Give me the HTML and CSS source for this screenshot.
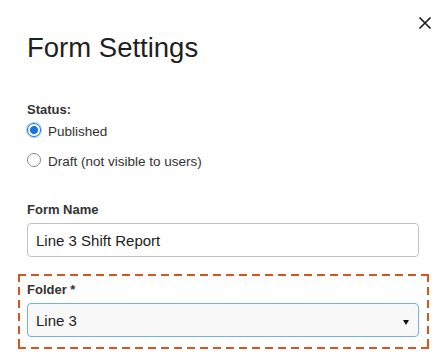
FILE: index.html
```html
<!DOCTYPE html>
<html lang="en">

<head>
    <meta charset="UTF-8">
    <meta name="viewport" content="width=device-width, initial-scale=1.0">
    <title>Form Settings</title>
    <link rel="stylesheet" href="styles.css">
</head>

<body>

    <div class="modal">
        <button class="close-btn" aria-label="Close">
            <svg width="14" height="14" viewBox="0 0 14 14">
                <path d="M1.5 1.5 L12.5 12.5 M12.5 1.5 L1.5 12.5" stroke="#1e1e1e" stroke-width="1.7" fill="none" />
            </svg>
        </button>

        <h1 class="modal-title">Form Settings</h1>

        <div class="field">
            <div class="field-label">Status:</div>
            <label class="radio-row">
                <input type="radio" name="status" class="radio" checked>
                <span>Published</span>
            </label>
            <label class="radio-row">
                <input type="radio" name="status" class="radio">
                <span>Draft (not visible to users)</span>
            </label>
        </div>

        <div class="field field-name">
            <label class="field-label" for="form-name">Form Name</label>
            <input type="text" class="text-input" id="form-name" value="Line 3 Shift Report">
        </div>

        <div class="field field-folder">
            <label class="field-label" for="folder">Folder *</label>
            <div class="select-wrap">
                <select class="select-input" id="folder">
                    <option>Line 3</option>
                    <option>Line 1</option>
                    <option>Line 2</option>
                </select>
            </div>
        </div>
    </div>

</body>

</html>
```

FILE: styles.css
```css
body {
    margin: 0;
    background-color: #fff;
    font-family: 'Liberation Sans', Arial, sans-serif;
    color: #333;
}

.modal {
    position: relative;
    padding: 31px 28px 0 27px;
}

.close-btn {
    position: absolute;
    top: 16px;
    right: 15px;
    width: 14px;
    height: 14px;
    padding: 0;
    border: none;
    background: none;
    cursor: pointer;
}

.close-btn svg {
    display: block;
}

.modal-title {
    margin: 0 0 37px;
    font-size: 27.5px;
    line-height: 34px;
    font-weight: 400;
    color: #1f1f1f;
}

.field-label {
    display: block;
    font-size: 13px;
    line-height: 16px;
    font-weight: bold;
    color: #333;
}

.radio-row {
    display: flex;
    align-items: flex-start;
    gap: 7px;
    margin-top: 4px;
    font-size: 13.5px;
    line-height: 20px;
    color: #333;
}

.radio-row + .radio-row {
    margin-top: 10px;
}

.radio {
    appearance: none;
    width: 14px;
    height: 14px;
    margin: 1px 0 0;
    border: 1px solid #8a8a8a;
    border-radius: 50%;
    background: #fff;
}

.radio:checked {
    border: 1px solid #1473e6;
    background: radial-gradient(circle, #1473e6 0 3.6px, #fff 4.4px);
    box-shadow: 0 0 0 1px #a9cdf7;
}

.field-name {
    margin-top: 30px;
}

.text-input,
.select-input {
    display: block;
    box-sizing: border-box;
    width: 100%;
    height: 34px;
    margin-top: 5px;
    padding: 0 8px;
    border: 1px solid #c2c2c2;
    border-radius: 4px;
    font-family: 'Liberation Sans', Arial, sans-serif;
    font-size: 15px;
    color: #222;
    background: #fff;
    outline: none;
}

/* dashed highlight drawn with gradients so the dash length matches */
.field-folder {
    margin: 17px -10px 0 -9px;
    padding: 8px 10px 12px 9px;
    background-image:
        repeating-linear-gradient(90deg, #d9541e 0 8px, transparent 8px 13px),
        repeating-linear-gradient(90deg, #d9541e 0 8px, transparent 8px 13px),
        repeating-linear-gradient(180deg, #d9541e 0 8px, transparent 8px 13px),
        repeating-linear-gradient(180deg, #d9541e 0 8px, transparent 8px 13px);
    background-size: 100% 2px, 100% 2px, 2px 100%, 2px 100%;
    background-position: left top, left bottom, left top, right top;
    background-repeat: no-repeat;
}

.select-wrap {
    position: relative;
}

.select-input {
    appearance: none;
    margin-top: 5px;
    border-color: #72b1f1;
    background: #f8f8f8;
}

.select-wrap::after {
    content: "";
    position: absolute;
    right: 10px;
    top: 50%;
    border-left: 3.5px solid transparent;
    border-right: 3.5px solid transparent;
    border-top: 5px solid #111;
}
```
